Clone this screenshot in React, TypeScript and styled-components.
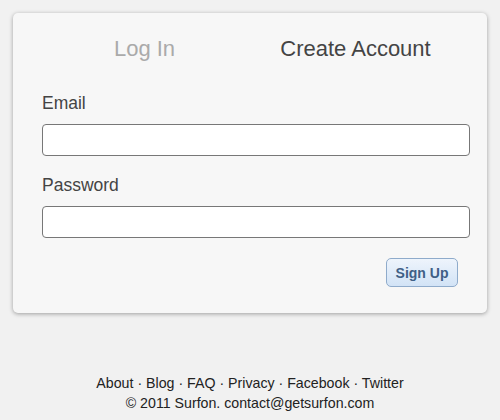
import React from "react";
import styled, { createGlobalStyle } from "styled-components";

const GlobalStyle = createGlobalStyle`
  html, body {
    margin: 0;
    padding: 0;
    background: #f1f1f1;
    font-family: "Liberation Sans", Arial, sans-serif;
  }
`;

const Page = styled.div`
  width: 500px;
  padding: 13px 13px 0 13px;
  box-sizing: border-box;
`;

const Card = styled.div`
  width: 474px;
  box-sizing: border-box;
  padding: 23px 17px 26px 29px;
  background: #f7f7f7;
  border-radius: 5px;
  box-shadow: 0 1px 4px rgba(0, 0, 0, 0.35);
`;

const Tabs = styled.div`
  display: grid;
  grid-template-columns: 211px 211px;
  margin-left: -3px;
`;

const Tab = styled.div<{ $active?: boolean }>`
  text-align: center;
  font-size: 22px;
  line-height: 26px;
  color: ${(p) => (p.$active ? "#444" : "#aaa")};
  cursor: pointer;
`;

const Field = styled.div<{ $first?: boolean }>`
  margin-top: ${(p) => (p.$first ? "31px" : "19px")};
`;

const Label = styled.label`
  display: block;
  font-size: 17.5px;
  line-height: 20px;
  color: #444;
  margin-bottom: 11px;
`;

const Input = styled.input`
  display: block;
  width: 428px;
  height: 32px;
  box-sizing: border-box;
  border: 1px solid #777;
  border-radius: 4px;
  background: #fff;
  padding: 4px 8px;
  font-size: 15px;
  font-family: inherit;
  outline: none;
`;

const Actions = styled.div`
  display: flex;
  justify-content: flex-end;
  width: 428px;
  margin-top: 20px;
`;

const Button = styled.button`
  width: 72px;
  height: 29px;
  margin-right: 12px;
  box-sizing: border-box;
  border: 1px solid #8fabcb;
  border-radius: 5px;
  background: linear-gradient(#eef4fc, #d2e3f6);
  color: #3f5f86;
  font-family: inherit;
  font-weight: bold;
  font-size: 14px;
  padding: 0;
  cursor: pointer;
`;

const Footer = styled.div`
  margin-top: 60px;
  text-align: center;
  font-size: 14.2px;
  line-height: 20px;
  color: #222;
`;

const Link = styled.a`
  color: #222;
  text-decoration: none;
`;

const links = ["About", "Blog", "FAQ", "Privacy", "Facebook", "Twitter"];

const App = () => {
  return (
    <>
      <GlobalStyle />
      <Page>
        <Card>
          <Tabs>
            <Tab>Log In</Tab>
            <Tab $active>Create Account</Tab>
          </Tabs>
          <Field $first>
            <Label>Email</Label>
            <Input type="text" />
          </Field>
          <Field>
            <Label>Password</Label>
            <Input type="password" />
          </Field>
          <Actions>
            <Button>Sign Up</Button>
          </Actions>
        </Card>
      </Page>
      <Footer>
        <div>
          {links.map((l, i) => (
            <React.Fragment key={l}>
              {i > 0 && " · "}
              <Link href="#">{l}</Link>
            </React.Fragment>
          ))}
        </div>
        <div>© 2011 Surfon. contact@getsurfon.com</div>
      </Footer>
    </>
  );
};

export default App;
